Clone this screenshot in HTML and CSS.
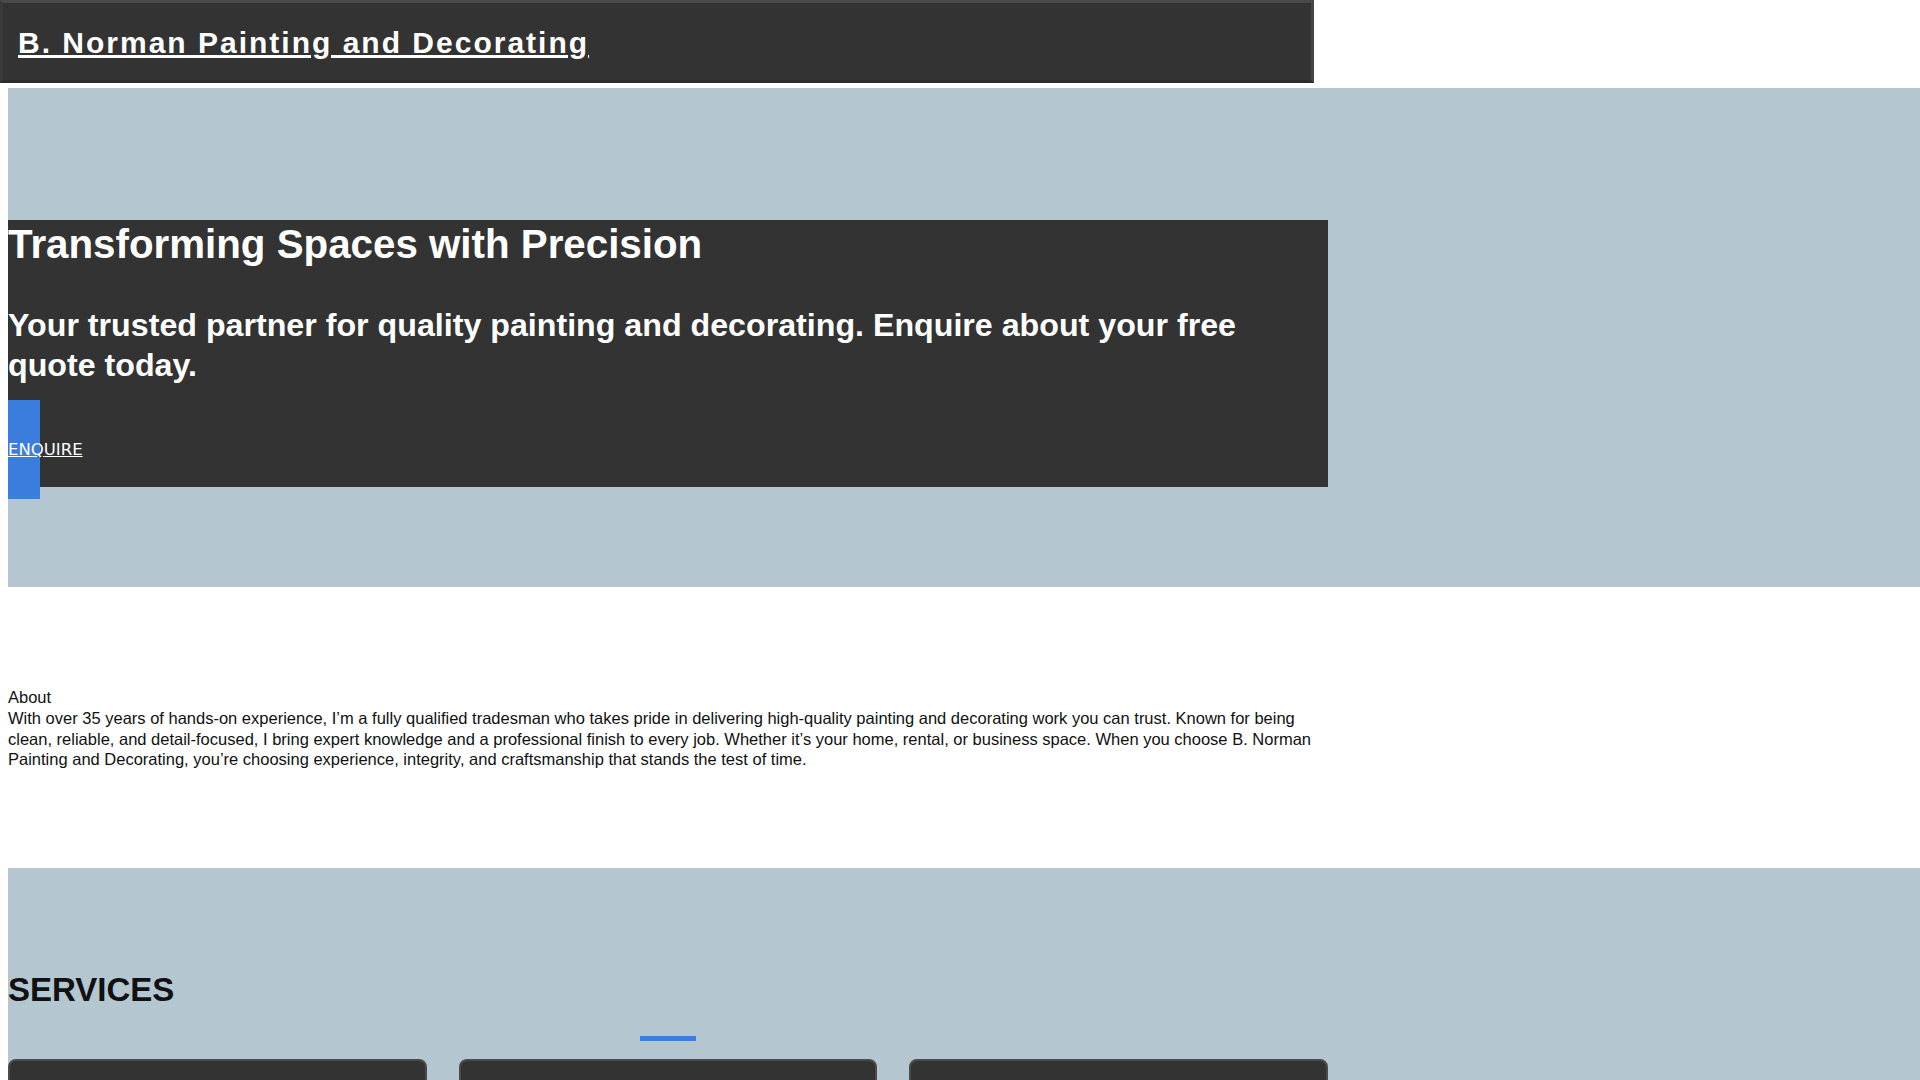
FILE: index.html
```html
<!DOCTYPE html>
<html lang="en">
<head>
<meta charset="utf-8">
<title>B. Norman Painting and Decorating</title>
<link rel="stylesheet" href="styles.css">
</head>
<body>
<header class="site-header">
  <a class="brand" href="#">B. Norman Painting and Decorating</a>
</header>
<main class="page">
  <section class="hero">
    <div class="hero-card">
      <h1 class="hero-title">Transforming Spaces with Precision</h1>
      <p class="hero-sub">Your trusted partner for quality painting and decorating. Enquire about your free quote today.</p>
      <a class="hero-btn" href="#contact">ENQUIRE</a>
    </div>
  </section>
  <section class="about">
    <div class="about-label">About</div>
    <p class="about-text">With over 35 years of hands-on experience, I’m a fully qualified tradesman who takes pride in delivering high-quality painting and decorating work you can trust. Known for being clean, reliable, and detail-focused, I bring expert knowledge and a professional finish to every job. Whether it’s your home, rental, or business space. When you choose B. Norman Painting and Decorating, you’re choosing experience, integrity, and craftsmanship that stands the test of time.</p>
  </section>
  <section class="services">
    <div class="services-inner">
      <h2 class="services-title">SERVICES</h2>
      <div class="services-rule"><span class="services-bar"></span></div>
      <div class="service-grid">
        <div class="service-card"></div>
        <div class="service-card"></div>
        <div class="service-card"></div>
      </div>
    </div>
  </section>
</main>
</body>
</html>
```

FILE: styles.css
```css
html, body {
  margin: 0;
  padding: 0;
}

body {
  font-family: "Liberation Sans", Arial, sans-serif;
  background: #ffffff;
  color: #111111;
}

.site-header {
  box-sizing: border-box;
  width: 1314px;
  height: 83px;
  background: #333333;
  border-style: solid;
  border-width: 3px;
  border-color: #4a4a4a #464646 #2c2c2c #3a3a3a;
  padding: 23px 15px 0;
}

.brand {
  color: #ffffff;
  font-size: 30px;
  font-weight: 700;
  letter-spacing: 2px;
  line-height: 34.5px;
  text-decoration: underline;
}

.page {
  padding-left: 8px;
  margin-top: 5px;
}

.hero {
  width: 100vw;
  background: #b4c6d0;
  padding: 132px 0 100px;
}

.hero-card {
  width: 1320px;
  height: 267px;
  background: #333333;
  color: #ffffff;
}

.hero-title {
  margin: 0;
  padding-top: 2px;
  font-size: 40.3px;
  font-weight: 700;
  line-height: 46px;
}

.hero-sub {
  margin: 36.6px 0 0;
  font-size: 32.2px;
  font-weight: 700;
  line-height: 40px;
}

.hero-btn {
  display: block;
  width: 32px;
  margin-top: 15px;
  padding: 40px 0;
  background: #3b7ddd;
  color: #ffffff;
  font-family: "DejaVu Sans", sans-serif;
  font-size: 16.5px;
  line-height: 19px;
  white-space: nowrap;
  text-decoration: underline;
}

.about {
  width: 1320px;
  padding: 100px 0 98px;
  font-size: 16.5px;
  line-height: 20.8px;
}

.about-text {
  margin: 0;
}

.services {
  width: 100vw;
  background: #b4c6d0;
  padding: 104px 0 60px;
}

.services-inner {
  width: 1320px;
}

.services-title {
  margin: 0;
  font-size: 33px;
  font-weight: 700;
  line-height: 36.8px;
}

.services-rule {
  display: flex;
  justify-content: center;
  margin-top: 27px;
}

.services-bar {
  display: block;
  width: 56px;
  height: 5px;
  background: #3b7ddd;
}

.service-grid {
  display: grid;
  grid-template-columns: repeat(3, 1fr);
  gap: 32px;
  margin-top: 18px;
}

.service-card {
  height: 240px;
  background: #333333;
  border: 2px solid #4a4a4a;
  border-radius: 8px;
}
```
